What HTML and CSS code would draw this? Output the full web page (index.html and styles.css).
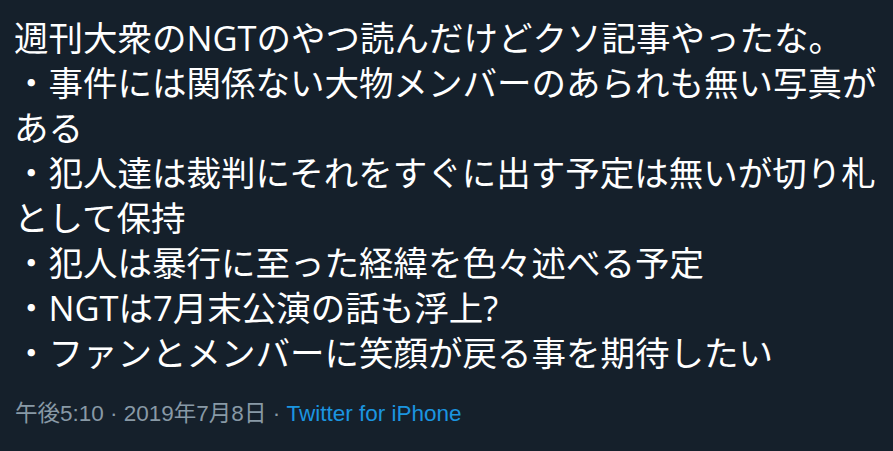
FILE: index.html
```html
<!DOCTYPE html>
<html lang="ja">
<head>
	<meta charset="UTF-8">
	<title>ツイート</title>
	<link rel="stylesheet" href="styles.css">
</head>
<body>
	<div class="tweet">
		<div class="text">週刊大衆のNGTのやつ読んだけどクソ記事やったな。<br>・事件には関係ない大物メンバーのあられも無い写真がある<br>・犯人達は裁判にそれをすぐに出す予定は無いが切り札として保持<br>・犯人は暴行に至った経緯を色々述べる予定<br>・NGTは7月末公演の話も浮上?<br>・ファンとメンバーに笑顔が戻る事を期待したい</div>
		<div class="meta">
			<span>午後5:10</span> · <span>2019年7月8日</span> · <a href="#">Twitter for iPhone</a>
		</div>
	</div>
</body>
</html>
```

FILE: styles.css
```css
*{
	margin: 0;
	padding: 0;
}
html,body{
	background: #15202b;
}
.tweet{
	width: 870px;
	padding: 15px 0 0 14px;
}
.text{
	color: #fff;
	font-size: 34.5px;
	line-height: 45px;
	font-family: "Open Sans", "Noto Sans CJK JP", sans-serif;
}
.meta{
	margin-top: 24px;
	padding-left: 1px;
	color: #8899a6;
	font-size: 22.5px;
	line-height: 30px;
	font-family: "Liberation Sans", "Noto Sans CJK JP", sans-serif;
}
.meta a{
	color: #1b95e0;
	text-decoration: none;
}
```
